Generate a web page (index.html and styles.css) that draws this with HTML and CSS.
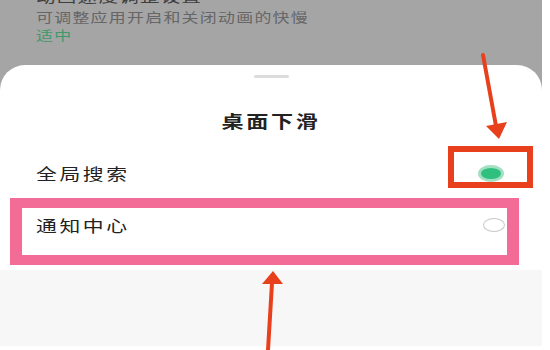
FILE: index.html
```html
<!DOCTYPE html>
<html lang="zh-CN">
<head>
    <meta charset="UTF-8">
    <meta name="viewport" content="width=device-width, initial-scale=1.0">
    <title>桌面下滑</title>
    <link rel="stylesheet" href="styles.css">
</head>
<body>
<div class="screen">
    <div class="settings">
        <p class="setting-name"><span class="wide">动画速度调整设置</span></p>
        <p class="setting-desc"><span class="wide">可调整应用开启和关闭动画的快慢</span></p>
        <p class="setting-value"><span class="wide">适中</span></p>
    </div>

    <div class="sheet">
        <div class="handle"></div>
        <h2 class="sheet-title"><span class="wide">桌面下滑</span></h2>

        <div class="option">
            <span class="option-label wide">全局搜索</span>
            <span class="radio checked"></span>
        </div>
        <div class="option marked">
            <span class="option-label wide">通知中心</span>
            <span class="radio"></span>
        </div>

        <div class="sheet-foot"></div>
    </div>

    <!-- annotations drawn over the screenshot -->
    <div class="red-box"></div>
    <svg class="arrows" width="542" height="350" viewBox="0 0 542 350">
        <line x1="483" y1="55" x2="496" y2="126" stroke="#e8401c" stroke-width="4" stroke-linecap="round"/>
        <polygon points="486,126 507,122 499,139" fill="#e8401c"/>
        <line x1="268" y1="350" x2="272" y2="283" stroke="#e8401c" stroke-width="4" stroke-linecap="round"/>
        <polygon points="262,284 283,284 273,271" fill="#e8401c"/>
    </svg>
</div>
</body>
</html>
```

FILE: styles.css
```css
body{
    margin: 0;
    background-color: #fff;
    font-family: "Noto Sans CJK SC", "Noto Sans", sans-serif;
}
.screen{
    position: relative;
    width: 542px;
    height: 350px;
    overflow: hidden;
    background-color: #a5a5a5;
}

/* the screenshot is stretched sideways, so text is widened */
.wide{
    display: inline-block;
    transform: scaleX(1.3);
    transform-origin: left center;
}

.settings{
    display: flow-root;
    height: 65px;
    padding-left: 36px;
    line-height: 18px;
}
.settings p{
    margin: 0;
    font-size: 13px;
    letter-spacing: 1px;
    white-space: nowrap;
}
.settings .setting-name{
    margin-top: -13px;
    color: #3e3e3e;
    font-size: 15px;
}
.settings .setting-desc{
    margin-top: 3px;
    color: #666;
}
.setting-value{
    color: #3f9a68;
}

.sheet{
    height: 285px;
    padding-top: 10px;
    box-sizing: border-box;
    background-color: #fff;
    border-radius: 25px 25px 0 0;
    color: #222;
}
.handle{
    width: 35px;
    height: 3px;
    margin: 0 auto;
    border-radius: 2px;
    background-color: #dcdcdc;
}
.sheet-title{
    margin: 31px 0 0;
    text-align: center;
    font-size: 17px;
    line-height: 24px;
    letter-spacing: 2px;
}
.sheet-title .wide{
    transform-origin: center;
}

.option{
    display: flex;
    align-items: center;
    justify-content: space-between;
    height: 50px;
    margin-top: 15px;
    padding: 0 38px 0 36px;
}
.option-label{
    font-size: 16px;
    letter-spacing: 2px;
    line-height: 24px;
}
.option.marked{
    height: 67px;
    margin: 0 23px 0 10px;
    padding: 5px 2px 0 14px;
    align-items: flex-start;
    box-sizing: border-box;
    border: 10px solid #f36c98;
    border-left-width: 12px;
    border-right-width: 12px;
}
.option.marked .radio{
    margin-top: 5px;
}

.radio{
    width: 22px;
    height: 14px;
    box-sizing: border-box;
    border: 1.5px solid #c8c8c8;
    border-radius: 50%;
}
.radio.checked{
    width: 26px;
    height: 17px;
    border: 3px solid #a3dfc1;
    background-color: #2fbf7f;
}

.sheet-foot{
    height: 76px;
    margin-top: 5px;
    background-color: #f7f7f7;
}

.red-box{
    position: absolute;
    left: 448px;
    top: 146px;
    width: 85px;
    height: 42px;
    box-sizing: border-box;
    border: 6px solid #e8401c;
}
.arrows{
    position: absolute;
    left: 0;
    top: 0;
}
```
